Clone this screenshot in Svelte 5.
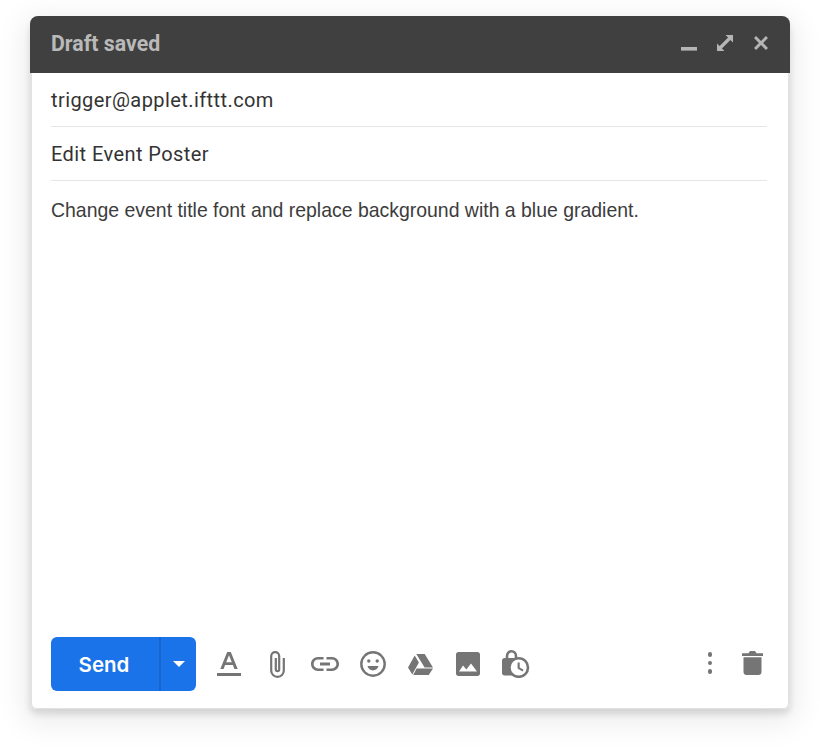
<script>
  let to = "trigger@applet.ifttt.com";
  let subject = "Edit Event Poster";
  let message = "Change event title font and replace background with a blue gradient.";
</script>

<div class="page">
  <div class="compose">
    <header class="compose-header">
      <div class="header-title">Draft saved</div>
      <div class="header-actions">
        <svg class="win-icon" viewBox="0 0 20 20"><rect x="2" y="14" width="16" height="3.6" /></svg>
        <svg class="win-icon" viewBox="0 0 20 20"><path d="M10.500 2H18v7.500l-2.600-2.600-8.500 8.500L9.500 18H2v-7.500l2.600 2.600 8.500-8.500z" /></svg>
        <svg class="win-icon" viewBox="0 0 20 20"><path d="M3 5.100L5.100 3 10 7.900 14.900 3 17 5.100 12.100 10 17 14.900 14.900 17 10 12.100 5.100 17 3 14.900 7.900 10z" /></svg>
      </div>
    </header>

    <div class="compose-main">
      <div class="compose-field">{to}</div>
      <div class="compose-field">{subject}</div>
      <div class="compose-body">{message}</div>

      <footer class="compose-footer">
        <div class="send-group">
          <button class="send-button">Send</button>
          <button class="send-more">
            <svg viewBox="0 0 12 6" width="12" height="6"><path d="M0 0h12L6 6z" /></svg>
          </button>
        </div>

        <div class="tools">
          <span class="tool">
            <svg width="24" height="24" viewBox="0 0 24 24"><path d="M0 21h24v3H0zM10.200 0h3.600l6.900 17h-3.300l-1.500-3.900H8.100L6.600 17H3.300zM9.200 10.300h5.600L12 3.200z" /></svg>
          </span>
          <span class="tool">
            <svg width="15" height="27" viewBox="0 0 15 27" class="outline"><path d="M13.800 7v12.500c0 3.500-2.800 6.300-6.300 6.300s-6.300-2.800-6.300-6.300V5.200C1.200 2.900 3 1.200 5.200 1.200s4 1.700 4 4v13.300c0 .9-.7 1.700-1.700 1.700s-1.700-.8-1.700-1.700V7" /></svg>
          </span>
          <span class="tool">
            <svg width="28" height="14" viewBox="0 0 28 14"><path d="M2.600 7c0-2.400 2-4.400 4.400-4.400h5.500V0H7C3.100 0 0 3.100 0 7s3.100 7 7 7h5.500v-2.600H7C4.600 11.400 2.600 9.400 2.600 7zM9 8.400h10V5.600H9zM21 0h-5.500v2.600H21c2.400 0 4.400 2 4.400 4.400s-2 4.400-4.400 4.400h-5.500V14H21c3.900 0 7-3.100 7-7s-3.100-7-7-7z" /></svg>
          </span>
          <span class="tool">
            <svg width="26" height="26" viewBox="0 0 26 26">
              <circle cx="13" cy="13" r="11.700" class="ring" />
              <circle cx="8.800" cy="10" r="1.700" />
              <circle cx="17.200" cy="10" r="1.700" />
              <path d="M7.500 15h11c-.6 2.500-2.800 4.400-5.500 4.400s-4.900-1.900-5.500-4.400z" />
            </svg>
          </span>
          <span class="tool shift">
            <svg width="25" height="21" viewBox="0 0 25 21"><path d="M8.300 0h8.400L25 13.400h-8.400zM6.700 1.600l4.200 7L4.300 20.600 0 13.400zM8.600 14.600H25l-4.300 6.400H5.200z" /></svg>
          </span>
          <span class="tool shift">
            <svg width="24" height="24" viewBox="0 0 24 24"><path d="M24 21.500v-19C24 1.100 22.900 0 21.500 0h-19C1.100 0 0 1.100 0 2.500v19C0 22.900 1.100 24 2.500 24h19c1.400 0 2.500-1.100 2.500-2.500zM7 13.500l3.300 4 4.700-6 6 8H3z" /></svg>
          </span>
          <span class="tool shift">
            <svg width="28" height="28" viewBox="0 0 28 28">
              <path d="M5 9V6.200C5 3.500 7 1.300 9.500 1.300S14 3.500 14 6.200V9" class="shackle" />
              <path d="M2.500 8h14C17.900 8 19 9.100 19 10.500V23c0 1.400-1.100 2.500-2.500 2.500h-14C1.100 25.500 0 24.400 0 23V10.500C0 9.100 1.100 8 2.500 8z" />
              <circle cx="16.700" cy="17.500" r="9.300" class="ring2" />
              <path d="M15.600 12.500h2.100v5l3.900 2.300-1.100 1.700-4.900-3z" />
            </svg>
          </span>
        </div>

        <div class="right-tools">
          <span class="dots"><i></i><i></i><i></i></span>
          <svg width="21" height="24" viewBox="0 0 21 24"><path d="M1.500 6.300h18V21c0 1.700-1.300 3-3 3h-12c-1.700 0-3-1.300-3-3zM0 2.200h6.500L8 0h5l1.500 2.200H21v2.900H0z" /></svg>
        </div>
      </footer>
    </div>
  </div>
</div>

<style>
  :global(body) {
    margin: 0;
    background: #fff;
  }

  .page {
    padding: 16px 30px 0;
    height: 738px;
    overflow: hidden;
  }

  .compose {
    width: 760px;
    height: 693px;
    display: flex;
    flex-direction: column;
    box-sizing: border-box;
    background: #fff;
    border-radius: 10px 10px 6px 6px;
    box-shadow:
      0 5px 7px rgba(0, 0, 0, 0.12),
      0 8px 30px 6px rgba(0, 0, 0, 0.08);
  }

  .compose-header {
    height: 57px;
    flex-shrink: 0;
    display: flex;
    align-items: center;
    justify-content: space-between;
    padding: 0 19px 3px 21px;
    box-sizing: border-box;
    background: #404040;
    border-radius: 8px 8px 0 0;
  }

  .header-title {
    font-family: Roboto, sans-serif;
    font-weight: 700;
    font-size: 21.300px;
    color: #b9b9b9;
  }

  .header-actions {
    display: flex;
    gap: 16px;
    align-items: center;
  }

  .win-icon {
    width: 20px;
    height: 20px;
    fill: #b5b5b5;
  }

  .compose-main {
    flex: 1;
    display: flex;
    flex-direction: column;
    min-height: 0;
    border: solid #e2e2e2;
    border-width: 0 2px 1px;
    border-radius: 0 0 6px 6px;
  }

  .compose-field {
    height: 54px;
    margin: 0 21px 0 19px;
    padding-top: 1px;
    line-height: 53px;
    box-sizing: border-box;
    border-bottom: 1px solid #e6e6e6;
    font-family: Roboto, sans-serif;
    font-size: 20px;
    letter-spacing: 0.42px;
    color: #333;
  }

  .compose-body {
    flex: 1;
    padding: 17px 19px 0;
    font-family: "Liberation Sans", Arial, sans-serif;
    font-size: 19.450px;
    line-height: 24px;
    color: #3c3c3c;
  }

  .compose-footer {
    display: flex;
    align-items: center;
    padding: 0 25px 17px 19px;
  }

  .send-group {
    display: flex;
    height: 54px;
    width: 145px;
    border-radius: 6px;
    overflow: hidden;
    background: #1a73e8;
  }

  .send-button,
  .send-more {
    border: 0;
    padding: 0;
    background: none;
    color: #fff;
    display: flex;
    align-items: center;
    justify-content: center;
  }

  .send-button {
    width: 108px;
    padding-right: 2px;
    font-family: Inter, sans-serif;
    font-weight: 600;
    font-size: 20.500px;
  }

  .send-more {
    flex: 1;
    border-left: 2px solid #1666cc;
  }

  .send-more svg {
    fill: #fff;
  }

  .tools {
    display: flex;
    margin-left: 9px;
  }

  .tool {
    width: 48px;
    height: 54px;
    display: flex;
    align-items: center;
    justify-content: center;
  }

  .tool.shift svg {
    margin-right: 2px;
  }

  .tool svg,
  .right-tools svg {
    fill: #757575;
  }

  .tool svg.outline {
    fill: none;
    stroke: #757575;
    stroke-width: 2.200;
  }

  .ring {
    fill: none;
    stroke: #757575;
    stroke-width: 2.400;
  }

  .tool svg .shackle {
    fill: none;
    stroke: #757575;
    stroke-width: 2.600;
  }

  .tool svg .ring2 {
    fill: #fff;
    stroke: #757575;
    stroke-width: 2.600;
  }

  .right-tools {
    margin-left: auto;
    margin-bottom: 2px;
    display: flex;
    align-items: center;
    gap: 30px;
  }

  .dots {
    display: flex;
    flex-direction: column;
    gap: 4px;
  }

  .dots i {
    width: 4.500px;
    height: 4.500px;
    border-radius: 50%;
    background: #757575;
  }
</style>
